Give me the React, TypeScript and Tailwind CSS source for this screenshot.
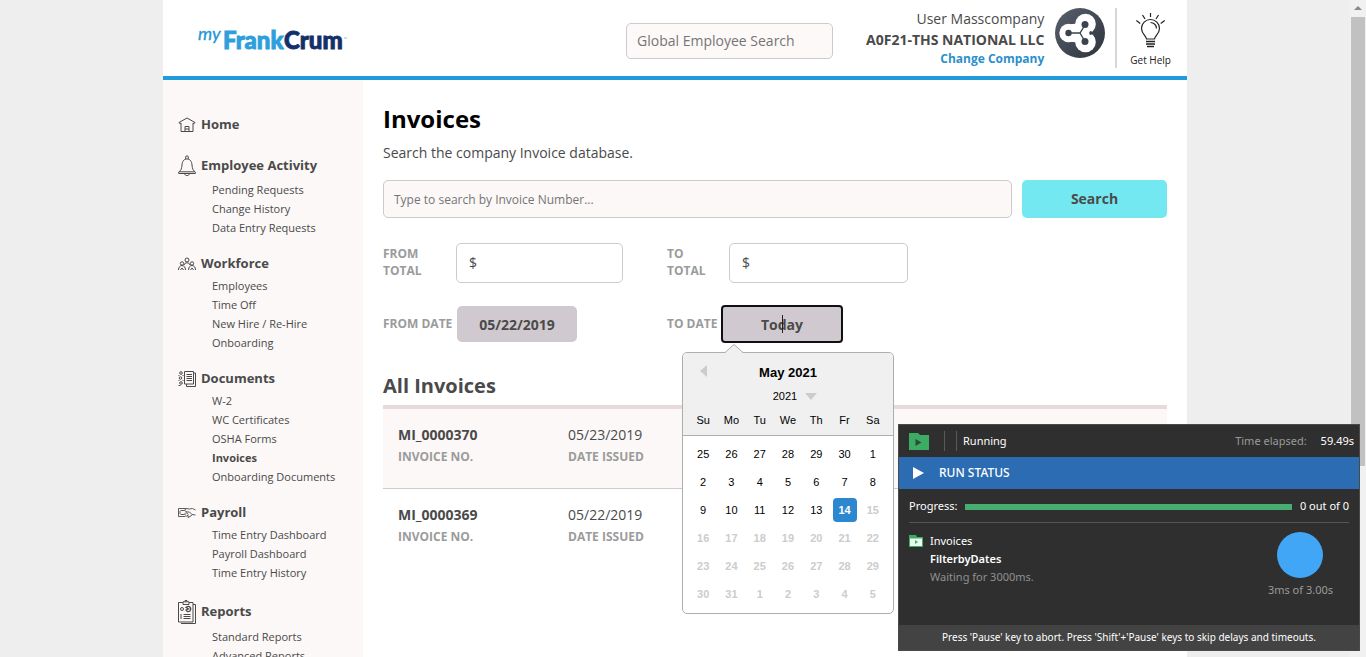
import React, { useState } from "react";

const iconProps = {
  fill: "none",
  stroke: "#4a4a4a",
  strokeWidth: 1,
  "aria-hidden": true,
} as const;

function HomeIcon() {
  return (
    <svg {...iconProps} width="18" height="16" viewBox="0 0 18 16">
      <path d="M1 5.500 9 1l8 4.500-.8 1.200L15 6v8.500H3V6l-1.200.7z" />
      <path d="M7 14.500v-5h4v5M7 12h4" />
    </svg>
  );
}

function BellIcon() {
  return (
    <svg {...iconProps} width="18" height="22" viewBox="0 0 18 22">
      <path d="M7.700 4V2c0-1.600 2.600-1.600 2.600 0v2" />
      <path d="M9 4c-3.500 0-4.700 2.700-5 6-.4 4-1 5.500-3.300 7v1.500h16.600V17C15 15.500 14.400 14 14 10c-.3-3.300-1.500-6-5-6zM1.500 16.800h15" />
      <path d="M6.500 18.500c.3 2.800 4.700 2.800 5 0" />
    </svg>
  );
}

function PeopleIcon() {
  return (
    <svg {...iconProps} width="18" height="14" viewBox="0 0 18 14">
      <circle cx="9" cy="3" r="2" />
      <path d="M6.200 8c.2-3 5.400-3 5.600 0" />
      <circle cx="4" cy="6.500" r="1.700" />
      <circle cx="14" cy="6.500" r="1.700" />
      <path d="M.5 13c0-6 7-6 7 0M10.500 13c0-6 7-6 7 0M2.500 13l1.500-2 1.500 2M12.500 13l1.500-2 1.500 2" />
    </svg>
  );
}

function DocumentsIcon() {
  return (
    <svg {...iconProps} width="18" height="18" viewBox="0 0 18 18">
      <path d="M6.500 1.500h9v12.500h-9z" />
      <path d="M15.500 3h2v13.500h-9V14" />
      <path d="M8.500 4.500H14M8.500 6.500H14M8.500 8.500H14M8.500 10.500H14" />
      <circle cx="3" cy="3" r="1.300" />
      <circle cx="2.500" cy="8" r="1.300" />
      <circle cx="3" cy="13" r="1.300" />
      <path d="M4.500 5.500h1M.5 5.500h1M4.500 10.500h1M.5 10.500h1M.5 15.500h2" />
    </svg>
  );
}

function PayrollIcon() {
  return (
    <svg {...iconProps} width="18" height="12" viewBox="0 0 18 12" strokeWidth="0.900">
      <path d="M8 1.500H.5v8h7" />
      <path d="M2.500 3.500h4M2.500 7.500h4M2 4v3" />
      <path d="m17.500 3-3-1.500-3 .5-3.500-.5-1.500 2L9 5h2.500l2.500 2.500-1 1.500-3 1.500-2-2L6.500 7 8 5.500l2.500 2M14 7.500l3.500.5M9 8l2 1.500" />
    </svg>
  );
}

function ReportsIcon() {
  return (
    <svg {...iconProps} width="18" height="24" viewBox="0 0 18 24">
      <path d="M5 2.500H.5v19.500H15V2.500h-4M15 4.500h2.500v19H3" />
      <path d="M5 1.800h6v2.700H5zM7 1.500V.5h2v1" />
      <circle cx="4" cy="9" r="1.500" />
      <path d="M8 7.500c3-2.500 6 0 4 3.500-2 1.500-3.500 0-4-1l2.500-1z" strokeWidth="1.300" />
      <path d="M5.500 14.500h7M5.500 16.500h7M5.500 18.500h7" />
      <path d="M3 14v5" />
    </svg>
  );
}

const nav = [
  { title: "Home", icon: <HomeIcon />, row: "h-5", items: [] },
  { title: "Employee Activity", icon: <BellIcon />, row: "h-6", items: ["Pending Requests", "Change History", "Data Entry Requests"] },
  { title: "Workforce", icon: <PeopleIcon />, row: "h-5", items: ["Employees", "Time Off", "New Hire / Re-Hire", "Onboarding"] },
  { title: "Documents", icon: <DocumentsIcon />, row: "h-5", items: ["W-2", "WC Certificates", "OSHA Forms", "Invoices", "Onboarding Documents"] },
  { title: "Payroll", icon: <PayrollIcon />, row: "h-5", items: ["Time Entry Dashboard", "Payroll Dashboard", "Time Entry History"] },
  { title: "Reports", icon: <ReportsIcon />, row: "h-[26px]", items: ["Standard Reports", "Advanced Reports"] },
];

function Sidebar() {
  return (
    <nav aria-label="Main" className="flex w-[200px] shrink-0 flex-col gap-[17px] bg-[#fbf8f7] pt-[35px] pl-[15px]">
      {nav.map((section) => (
        <section key={section.title}>
          <a href="#" className={`flex items-center gap-[5px] text-[13px] font-bold text-[#4a4a4a] ${section.row}`}>
            <span className="flex w-[18px] justify-center">{section.icon}</span>
            {section.title}
          </a>
          <ul className="pt-[2px] pl-[34px] text-[11px] leading-[19px] text-[#4a4a4a]">
            {section.items.map((item) => (
              <li key={item}>
                <a href="#" className={item === "Invoices" ? "font-bold" : ""}>{item}</a>
              </li>
            ))}
          </ul>
        </section>
      ))}
    </nav>
  );
}

function Logo() {
  return (
    <a href="#" aria-label="myFrankCrum" className="mt-[22px] ml-[34px] block">
      <svg width="152" height="32" viewBox="0 0 152 32" aria-hidden="true" fontFamily="Lato, sans-serif">
        <text x="1" y="18" fontStyle="italic" fontSize="18" fill="#1f97d4" stroke="#1f97d4" strokeWidth="0.300">my</text>
        <g fontWeight="900" fontSize="24" strokeWidth="0.900">
          <text x="26" y="27" fill="#2d9fdc" stroke="#2d9fdc">Frank</text>
          <text x="87" y="27" fill="#14306b" stroke="#14306b">Crum</text>
        </g>
        <path d="M147 16h3" stroke="#a9b4cc" />
      </svg>
    </a>
  );
}

function CompanyMark() {
  return (
    <svg width="50" height="50" viewBox="0 0 50 50" aria-hidden="true">
      <defs>
        <linearGradient id="mark" x1="0" y1="0" x2="1" y2="1">
          <stop offset="0" stopColor="#59616d" />
          <stop offset="1" stopColor="#2d333d" />
        </linearGradient>
      </defs>
      <circle cx="25" cy="25" r="25" fill="url(#mark)" />
      <g fill="#fff">
        <circle cx="30.500" cy="16" r="10.300" />
        <circle cx="13.500" cy="25" r="9.200" />
        <circle cx="30.500" cy="34" r="10.300" />
        <path d="M14 16.500l8-1 10 9.500-10 9.500-8-1z" />
      </g>
      <path d="M42 25 35 23a3 3 0 0 0 0 4z" fill="#3c434e" />
      <path d="M13.500 25H25l5-8M25 25l5 8.500" fill="none" stroke="#3c434e" strokeWidth="1.400" />
      <g fill="#3c434e">
        <circle cx="13.500" cy="25" r="3.200" />
        <circle cx="30" cy="16.500" r="3.500" />
        <circle cx="30" cy="33.500" r="3.500" />
      </g>
    </svg>
  );
}

function BulbIcon() {
  return (
    <svg className="shrink-0" width="30" height="36" viewBox="0 0 30 36" fill="none" stroke="#222" strokeWidth="1.200" aria-hidden="true">
      <path d="M10.500 26c0-3-5-5-5-10.500a9 9 0 0 1 18 0c0 5.500-5 7.500-5 10.500z" />
      <path d="M14.500 9.500a6 6 0 0 1 6 6" />
      <path d="M10 28.500h9M10 31h9M11 33.500h7" strokeWidth="1.700" />
      <path d="M14.500 0v4M6.500 2 9 6M22.500 2 20 6M.3 7.500l4 3M28.700 7.500l-4 3" />
    </svg>
  );
}

function Header() {
  return (
    <header className="flex h-20 items-start border-b-4 border-[#229bdb] bg-white text-[#4a4a4a]">
      <Logo />
      <input
        aria-label="Global Employee Search"
        placeholder="Global Employee Search"
        className="mt-[23px] ml-auto h-9 w-[207px] rounded-[5px] border border-[#cccacc] bg-[#fcf9f8] px-[10px] pb-[2px] text-[14px] text-[#4a4a4a] placeholder:text-[#757575]"
      />
      <div className="ml-[33px] flex flex-col items-end pt-[9px]">
        <span className="text-[14px] leading-5">User Masscompany</span>
        <strong className="text-[14px] leading-[22px]">A0F21-THS NATIONAL LLC</strong>
        <a href="#" className="text-[12px] leading-4 font-bold text-[#2b8fcb]">Change Company</a>
      </div>
      <div className="ml-[11px] pt-2"><CompanyMark /></div>
      <a href="#" className="mt-2 mr-4 ml-[10px] flex h-[60px] flex-col items-center border-l-2 border-[#d8d8d8] pt-[5px] pl-[13px] text-[10px] text-[#222]">
        <BulbIcon />
        <span className="pt-[3px] leading-4">Get Help</span>
      </a>
    </header>
  );
}

const weeks = [
  [25, 26, 27, 28, 29, 30, 1],
  [2, 3, 4, 5, 6, 7, 8],
  [9, 10, 11, 12, 13, 14, 15],
  [16, 17, 18, 19, 20, 21, 22],
  [23, 24, 25, 26, 27, 28, 29],
  [30, 31, 1, 2, 3, 4, 5],
];

function dayClass(week: number, day: number) {
  if (week === 2 && day === 5) return "rounded-[4px] bg-[#2a87d0] font-bold text-white";
  if (week > 2 || (week === 2 && day === 6)) return "font-bold text-[#cccccc]";
  return "text-black";
}

function Calendar() {
  return (
    <div className="absolute top-[47px] -left-[39px] z-10 w-[212px] rounded-[5px] border border-[#aeaeae] bg-white font-['Liberation_Sans',Arial,sans-serif] text-black">
      <svg className="absolute -top-[9px] left-[42px]" width="18" height="10" viewBox="0 0 18 10" aria-hidden="true">
        <path d="M0 9 9 0l9 9v1H0z" fill="#f0f0f0" />
        <path d="M0 8.500 9 .5l9 8" fill="none" stroke="#aeaeae" />
      </svg>
      <div className="rounded-t-[5px] border-b border-[#aeaeae] bg-[#f0f0f0] pb-[5px]">
        <div className="grid h-[35px] grid-cols-[40px_1fr_40px] items-center pt-1">
          <button aria-label="Previous month" className="flex justify-center pb-1">
            <svg width="7" height="12" viewBox="0 0 7 12" aria-hidden="true"><path d="M7 0v12L0 6z" fill="#ccc" /></svg>
          </button>
          <h3 className="text-center text-[13px] font-bold">May 2021</h3>
        </div>
        <button className="mx-auto flex h-4 items-center gap-2 pl-[14px] text-[11px]">
          2021
          <svg width="12" height="7" viewBox="0 0 12 7" aria-hidden="true"><path d="M0 0h12L6 7z" fill="#ccc" /></svg>
        </button>
        <div className="grid grid-cols-7 px-[6px] pt-[6px] text-center text-[11px] leading-5">
          {["Su", "Mo", "Tu", "We", "Th", "Fr", "Sa"].map((name) => <span key={name}>{name}</span>)}
        </div>
      </div>
      <div className="grid grid-cols-7 justify-items-center gap-y-1 px-[6px] pt-[6px] pb-[7px] text-[11px]">
        {weeks.flatMap((week, w) =>
          week.map((n, d) => (
            <button key={`${w}-${d}`} className={`h-6 w-6 ${dayClass(w, d)}`}>{n}</button>
          )),
        )}
      </div>
    </div>
  );
}

const invoices = [
  { no: "MI_0000370", date: "05/23/2019" },
  { no: "MI_0000369", date: "05/22/2019" },
];

function Invoices() {
  const [from, setFrom] = useState("05/22/2019");
  const [to, setTo] = useState("Today");
  const label = "text-[12px] leading-[17px] font-bold text-[#9b9b9b]";
  const money = "h-10 rounded-[5px] border border-[#cccacc] bg-white px-3 pb-[2px] text-[14px] text-[#4a4a4a]";
  return (
    <main className="min-w-0 flex-1 px-5 pt-6 text-[#4a4a4a]">
      <h1 className="text-[24px] leading-[30px] font-bold text-black">Invoices</h1>
      <p className="pt-2 text-[14px] leading-[22px]">Search the company Invoice database.</p>
      <form className="mt-4 flex gap-[10px]" onSubmit={(e) => e.preventDefault()}>
        <input
          aria-label="Invoice number"
          placeholder="Type to search by Invoice Number..."
          className="h-[38px] min-w-0 flex-1 rounded-[5px] border border-[#cccacc] bg-[#fcf8f7] px-[10px] text-[12px] placeholder:text-[#757575]"
        />
        <button className="h-[38px] w-[145px] rounded-[5px] bg-[#74e8f1] pb-[2px] text-[14px] font-bold">Search</button>
      </form>
      <div className="mt-[25px] grid grid-cols-[284px_1fr] items-center gap-y-[22px]">
        <div className="flex items-center">
          <label htmlFor="from-total" className={`w-[73px] pr-6 pb-[2px] ${label}`}>FROM TOTAL</label>
          <input id="from-total" defaultValue="$" className={`w-[167px] ${money}`} />
        </div>
        <div className="flex items-center">
          <label htmlFor="to-total" className={`w-[62px] pr-4 pb-[2px] ${label}`}>TO TOTAL</label>
          <input id="to-total" defaultValue="$" className={`w-[179px] ${money}`} />
        </div>
        <div className="flex items-center">
          <label htmlFor="from-date" className={`w-[74px] pb-[2px] ${label}`}>FROM DATE</label>
          <input id="from-date" value={from} onChange={(e) => setFrom(e.target.value)} className="h-9 w-[120px] rounded-[5px] bg-[#d0cad0] text-center text-[14px] font-bold" />
        </div>
        <div className="flex items-center">
          <label htmlFor="to-date" className={`w-[54px] pb-[2px] ${label}`}>TO DATE</label>
          <div className="relative">
            <input id="to-date" value={to} onChange={(e) => setTo(e.target.value)} className="block h-[38px] w-[122px] rounded-[4px] border-2 border-[#101010] bg-[#d0cad0] text-center text-[14px] font-bold outline-none" />
            <span className="absolute top-[10px] left-[61px] h-[18px] w-px bg-[#222]" />
            <Calendar />
          </div>
        </div>
      </div>
      <h2 className="mt-[29px] text-[20px] leading-7 font-bold">All Invoices</h2>
      <ul className="mt-[5px] border-t-4 border-[#e7dadc]">
        {invoices.map((invoice) => (
          <li key={invoice.no} className="flex h-20 border-b border-[#cccacc] px-[15px] pt-[15px] odd:bg-[#fcf8f7] last:border-0">
            <div className="w-[170px]">
              <a href="#" className="block text-[14px] leading-[22px] font-bold">{invoice.no}</a>
              <span className="block text-[12px] leading-[22px] font-bold text-[#9b9b9b]">INVOICE NO.</span>
            </div>
            <div>
              <span className="block text-[14px] leading-[22px]">{invoice.date}</span>
              <span className="block text-[12px] leading-[22px] font-bold text-[#9b9b9b]">DATE ISSUED</span>
            </div>
          </li>
        ))}
      </ul>
    </main>
  );
}

function RunPanel() {
  return (
    <aside className="absolute right-[6px] bottom-[6px] z-20 w-[462px] border border-[#4a4a4a] bg-[#2f2f2f] font-['Noto_Sans',sans-serif] text-[11px] text-white">
      <div className="flex h-8 items-center pr-[5px] pl-[10px]">
        <svg width="20" height="17" viewBox="0 0 20 17" aria-hidden="true">
          <path d="M0 0h9l2 2h9v15H0z" fill="#3cab64" />
          <path d="M6.500 6v7l6-3.500z" fill="#2f4a39" />
        </svg>
        <span className="ml-[15px] h-5 w-[13px] border-x border-[#5a5a5a]" />
        <span className="ml-[6px]">Running</span>
        <span className="ml-auto text-[#9a9a9a]">Time elapsed:</span>
        <span className="ml-[14px]">59.49s</span>
      </div>
      <div className="flex h-8 items-center gap-[15px] bg-[#2b6cb3] pl-[14px] text-[12px] font-medium">
        <svg width="11" height="12" viewBox="0 0 11 12" aria-hidden="true"><path d="M0 0v12l11-6z" fill="#fff" /></svg>
        RUN STATUS
      </div>
      <div className="mx-[10px] flex h-[34px] items-center border-b border-[#555] pt-[2px]">
        <span>Progress:</span>
        <div className="mx-2 h-[6px] flex-1 bg-[#48ad70]" />
        <span>0 out of 0</span>
      </div>
      <div className="flex h-[102px] px-[10px] pt-[9px]">
        <svg className="mt-[3px]" width="14" height="12" viewBox="0 0 14 12" aria-hidden="true">
          <path d="M0 0h7l1 2h6v10H0z" fill="#3cab64" />
          <path d="M1 3.500h12V11H1z" fill="#eafff0" />
          <path d="M6 5v4l3-2z" fill="#3cab64" />
        </svg>
        <div className="ml-[7px] leading-[18px]">
          <p>Invoices</p>
          <p className="font-semibold">FilterbyDates</p>
          <p className="text-[#8f8f8f]">Waiting for 3000ms.</p>
        </div>
        <div className="mr-4 ml-auto flex flex-col items-center">
          <div className="h-[46px] w-[46px] rounded-full bg-[#40a6f5]" />
          <span className="leading-6 text-[#9a9a9a]">3ms of 3.00s</span>
        </div>
      </div>
      <p className="bg-[#434343] text-center text-[10px] leading-[25px]">
        Press 'Pause' key to abort. Press 'Shift'+'Pause' keys to skip delays and timeouts.
      </p>
    </aside>
  );
}

export default function App() {
  return (
    <div className="relative flex h-screen overflow-hidden bg-[#eeeeee] font-['Open_Sans',sans-serif]">
      <div className="flex min-w-0 flex-1 justify-center">
        <div className="flex w-full max-w-[1024px] flex-col bg-white">
          <Header />
          <div className="flex min-h-0 flex-1">
            <Sidebar />
            <Invoices />
          </div>
        </div>
      </div>
      <div className="flex w-4 flex-col items-center bg-[#f1f1f1] pt-[6px]" aria-hidden="true">
        <svg width="8" height="4" viewBox="0 0 8 4"><path d="M0 4 4 0l4 4z" fill="#8a8a8a" /></svg>
        <div className="mt-[7px] h-[69%] w-[14px] bg-[#c1c1c1]" />
      </div>
      <RunPanel />
    </div>
  );
}
